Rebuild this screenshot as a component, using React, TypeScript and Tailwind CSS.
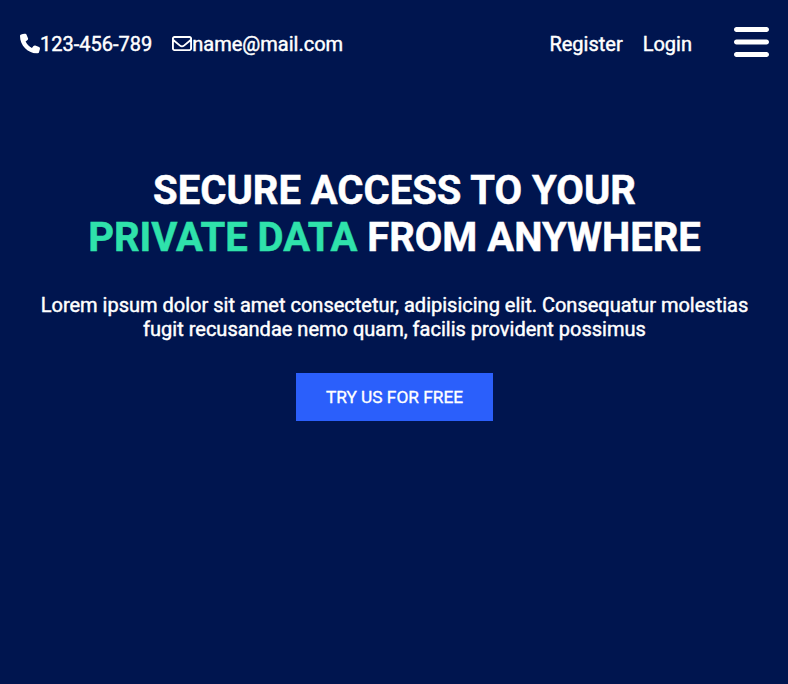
import React from "react";
import { FaPhone, FaRegEnvelope, FaBars } from "react-icons/fa6";

function Header() {
  return (
    <header className="flex h-[84px] items-center justify-between pl-5 pr-[19px] text-[20px] leading-6">
      <ul className="flex gap-5 pt-1">
        <li className="flex items-center">
          <FaPhone size={20} className="-translate-y-[0.5px]" />
          <a href="#" className="[-webkit-text-stroke:0.45px_white]">123-456-789</a>
        </li>
        <li className="flex items-center">
          <FaRegEnvelope size={20} className="-translate-y-[0.5px]" />
          <a href="#" className="[-webkit-text-stroke:0.45px_white]">name@mail.com</a>
        </li>
      </ul>
      <div className="flex items-center">
        <nav className="flex gap-5 pt-1 [-webkit-text-stroke:0.45px_white]">
          <a href="#">Register</a>
          <a href="#">Login</a>
        </nav>
        <button className="ml-[42px]" aria-label="Menu">
          <FaBars className="h-10 w-[35px]" />
        </button>
      </div>
    </header>
  );
}

export default function App() {
  return (
    <div className="min-h-screen overflow-hidden bg-[#00154f] font-['Roboto',sans-serif] text-white">
      <Header />
      <main className="flex flex-col items-center pl-[21px] pr-5 pt-[83px] text-center">
        <h1 className="text-[40px] leading-[47px] font-bold uppercase [-webkit-text-stroke:0.5px_currentColor]">
          Secure access to your
          <br />
          <span className="text-[#2fe2ab] [-webkit-text-stroke-color:#2fe2ab]">private data</span> from anywhere
        </h1>
        <p className="mt-8 text-[20px] leading-6 [-webkit-text-stroke:0.45px_white]">
          Lorem ipsum dolor sit amet consectetur, adipisicing elit. Consequatur molestias fugit recusandae nemo quam,
          facilis provident possimus
        </p>
        <button className="mt-8 h-12 w-[197px] bg-[#2b5ffb] pt-0.5 text-[17.3px] uppercase [-webkit-text-stroke:0.35px_white]">
          Try us for free
        </button>
      </main>
    </div>
  );
}
